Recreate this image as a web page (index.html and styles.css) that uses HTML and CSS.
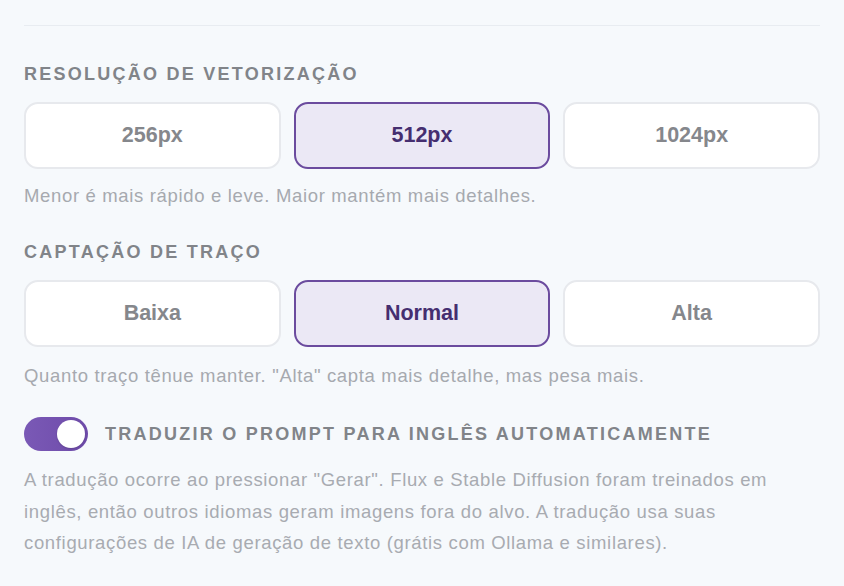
FILE: index.html
```html
<!DOCTYPE html>
<html lang="pt-BR">
<head>
<meta charset="utf-8">
<title>Configurações</title>
<link rel="stylesheet" href="styles.css">
</head>
<body>
<div class="page">
  <div class="divider"></div>

  <section class="group">
    <h3 class="label">RESOLUÇÃO DE VETORIZAÇÃO</h3>
    <div class="options">
      <button class="opt">256px</button>
      <button class="opt selected">512px</button>
      <button class="opt">1024px</button>
    </div>
    <p class="hint">Menor é mais rápido e leve. Maior mantém mais detalhes.</p>
  </section>

  <section class="group second">
    <h3 class="label">CAPTAÇÃO DE TRAÇO</h3>
    <div class="options">
      <button class="opt">Baixa</button>
      <button class="opt selected">Normal</button>
      <button class="opt">Alta</button>
    </div>
    <p class="hint hint-second">Quanto traço tênue manter. "Alta" capta mais detalhe, mas pesa mais.</p>
  </section>

  <div class="toggle-row">
    <span class="switch on"><span class="knob"></span></span>
    <span class="label toggle-label">TRADUZIR O PROMPT PARA INGLÊS AUTOMATICAMENTE</span>
  </div>
  <p class="desc">A tradução ocorre ao pressionar "Gerar". Flux e Stable Diffusion foram treinados em inglês, então outros idiomas geram imagens fora do alvo. A tradução usa suas configurações de IA de geração de texto (grátis com Ollama e similares).</p>
</div>
</body>
</html>
```

FILE: styles.css
```css
* { box-sizing: border-box; }
html, body {
  margin: 0;
  padding: 0;
  background: #f6f9fc;
}
body {
  font-family: "Liberation Sans", Arial, Helvetica, sans-serif;
}
.page {
  padding: 25px 24px 0 24px;
}
.divider {
  height: 1px;
  background: #e8ecf1;
}
.group {
  margin-top: 38px;
}
.group.second {
  margin-top: 34px;
}
.label {
  margin: 0;
  font-size: 18px;
  line-height: 20px;
  font-weight: 700;
  letter-spacing: 2.25px;
  color: #818489;
}
.options {
  margin-top: 18px;
  display: grid;
  grid-template-columns: 1fr 1fr 1fr;
  gap: 13px;
}
.opt {
  height: 67px;
  border: 2px solid #e7e9ed;
  border-radius: 14px;
  background: #ffffff;
  font-family: inherit;
  font-size: 21.5px;
  font-weight: 700;
  color: #85878c;
  padding: 0;
}
.opt.selected {
  background: #ebe8f5;
  border-color: #6b4b9e;
  color: #452e70;
}
.hint {
  margin: 15px 0 0 0;
  font-size: 18.5px;
  letter-spacing: 0.66px;
  line-height: 24px;
  color: #a6a9af;
}
.hint-second {
  margin-top: 17px;
}
.toggle-row {
  margin-top: 29px;
  display: flex;
  align-items: center;
  gap: 17px;
}
.switch {
  position: relative;
  display: block;
  width: 64px;
  height: 34px;
  border-radius: 17px;
  background: linear-gradient(90deg, #7a59b6, #6e4ba9);
  flex: none;
}
.knob {
  position: absolute;
  top: 3px;
  right: 3px;
  width: 28px;
  height: 28px;
  border-radius: 50%;
  background: #ffffff;
  box-shadow: 0 1px 2px rgba(0,0,0,0.15);
}
.toggle-label {
  line-height: 34px;
}
.desc {
  margin: 13px 0 0 0;
  font-size: 18.5px;
  letter-spacing: 0.66px;
  line-height: 31.5px;
  color: #a8abb1;
}
```
